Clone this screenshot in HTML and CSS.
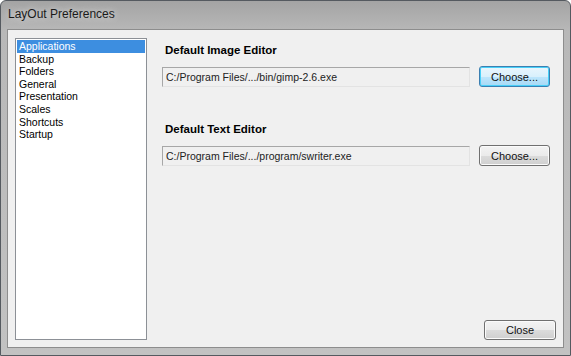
FILE: index.html
```html
<!DOCTYPE html>
<html>
<head>
<meta charset="utf-8">
<link rel="stylesheet" href="styles.css">
</head>
<body>
<div class="window">
  <div class="titlebar">LayOut Preferences</div>
  <div class="client">
    <ul class="list">
      <li class="selected">Applications</li>
      <li>Backup</li>
      <li>Folders</li>
      <li>General</li>
      <li>Presentation</li>
      <li>Scales</li>
      <li>Shortcuts</li>
      <li>Startup</li>
    </ul>
    <div class="pane">
      <div class="group">
        <div class="heading">Default Image Editor</div>
        <div class="row">
          <div class="field">C:/Program Files/.../bin/gimp-2.6.exe</div>
          <button class="btn focused">Choose...</button>
        </div>
      </div>
      <div class="group">
        <div class="heading">Default Text Editor</div>
        <div class="row">
          <div class="field">C:/Program Files/.../program/swriter.exe</div>
          <button class="btn">Choose...</button>
        </div>
      </div>
      <div class="footer">
        <button class="btn close">Close</button>
      </div>
    </div>
  </div>
</div>
</body>
</html>
```

FILE: styles.css
```css
html, body {
  margin: 0;
  padding: 0;
  background: #ffffff;
}
.window {
  width: 571px;
  height: 356px;
  box-sizing: border-box;
  border: 1px solid #555a60;
  border-radius: 6px 6px 0 0;
  background: linear-gradient(#a4a4a4, #b8b8b8 30px, #c2c2c2);
  display: flex;
  flex-direction: column;
  font-family: "Liberation Sans", Arial, sans-serif;
  font-size: 10.5px;
  color: #000;
}
.titlebar {
  height: 28px;
  box-sizing: border-box;
  padding: 6px 0 0 7px;
  font-family: "Liberation Sans", Arial, sans-serif;
  font-size: 12px;
  color: #1a1a1a;
  text-shadow: 0 0 6px #e8e8e8;
}
.client {
  flex: 1;
  margin: 0 6px 7px 6px;
  background: #f0f0f0;
  border: 1px solid #8d8d8d;
  display: flex;
  padding: 8px 7px 7px 7px;
  gap: 15px;
}
.list {
  list-style: none;
  margin: 0;
  padding: 1px;
  width: 128px;
  background: #fff;
  border: 1px solid #8c9096;
}
.list li {
  height: 12.6px;
  line-height: 12px;
  padding-left: 2px;
}
.list li.selected {
  background: #3d8ee0;
  color: #fff;
}
.pane {
  flex: 1;
  display: flex;
  flex-direction: column;
}
.group {
  display: flex;
  flex-direction: column;
  margin-bottom: 30px;
}
.heading {
  font-weight: bold;
  font-size: 11.5px;
  padding: 6px 0 0 3px;
  height: 28px;
  box-sizing: border-box;
}
.row {
  display: flex;
  align-items: center;
  gap: 9px;
}
.field {
  width: 308px;
  height: 20px;
  box-sizing: border-box;
  border: 1px solid #a7a7a7;
  border-right-color: #e3e3e3;
  border-bottom-color: #e3e3e3;
  background: #f0f0f0;
  padding: 3px 0 0 3px;
  color: #222;
}
.btn {
  font-family: "Liberation Sans", Arial, sans-serif;
  font-size: 11px;
  color: #111;
  width: 71px;
  height: 21px;
  border: 1px solid #707070;
  border-radius: 3px;
  background: linear-gradient(#f3f3f3, #ebebeb 50%, #dcdcdc 50%, #cfcfcf);
  box-shadow: inset 0 0 0 1px #fbfbfb;
  padding: 0;
}
.btn.focused {
  border-color: #3c7fb1;
  background: linear-gradient(#eaf6fd, #d9f0fc 50%, #bee6fd 50%, #a7d9f5);
  box-shadow: inset 0 0 0 1px #48d0f8;
}
.footer {
  margin-top: auto;
  display: flex;
  justify-content: flex-end;
}
.btn.close {
  width: 72px;
  height: 20px;
}
```
